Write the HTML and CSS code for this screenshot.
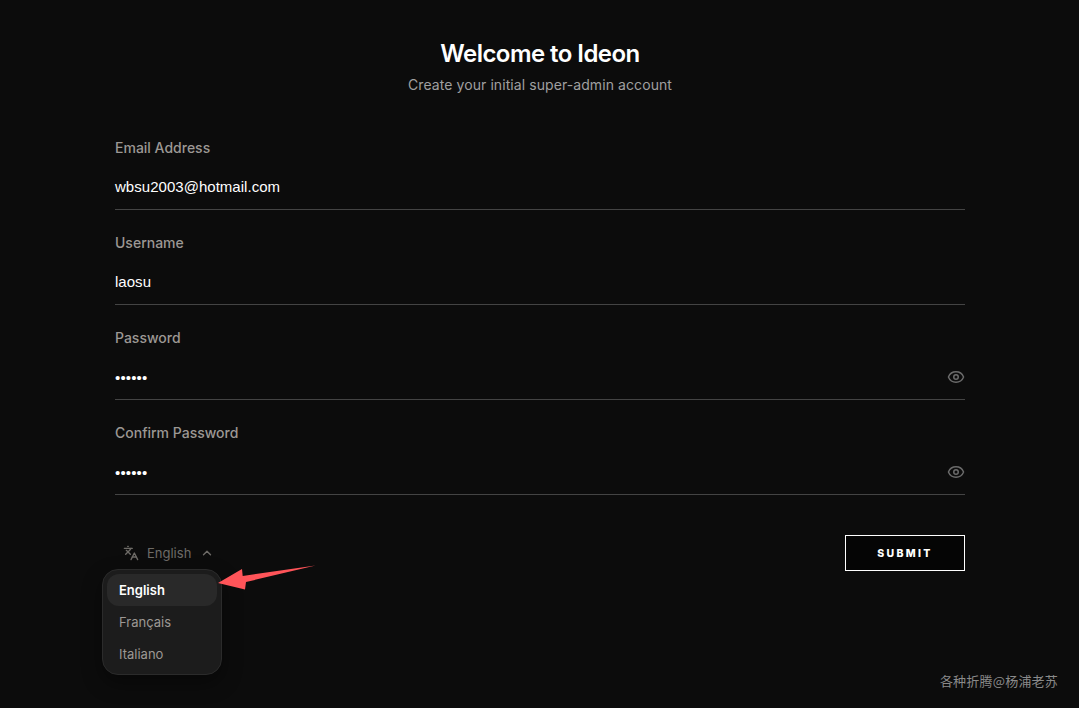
FILE: index.html
```html
<!DOCTYPE html>
<html lang="en">
<head>
<meta charset="utf-8">
<title>Welcome to Ideon</title>
<link rel="stylesheet" href="styles.css">
</head>
<body>
<main class="page">
  <header class="head">
    <h1 class="title">Welcome to Ideon</h1>
    <p class="subtitle">Create your initial super-admin account</p>
  </header>
  <form class="form">
    <div class="field">
      <label class="label">Email Address</label>
      <div class="control"><span class="value text">wbsu2003@hotmail.com</span></div>
    </div>
    <div class="field">
      <label class="label">Username</label>
      <div class="control"><span class="value text">laosu</span></div>
    </div>
    <div class="field">
      <label class="label">Password</label>
      <div class="control">
        <span class="value dots">••••••</span>
        <svg class="eye" viewBox="0 0 24 24" fill="none" stroke="currentColor" stroke-width="2" stroke-linecap="round" stroke-linejoin="round"><path d="M2.06 12.35a1 1 0 0 1 0-.7 10.75 10.75 0 0 1 19.88 0 1 1 0 0 1 0 .7 10.75 10.75 0 0 1-19.88 0"/><circle cx="12" cy="12" r="3"/></svg>
      </div>
    </div>
    <div class="field">
      <label class="label">Confirm Password</label>
      <div class="control">
        <span class="value dots">••••••</span>
        <svg class="eye" viewBox="0 0 24 24" fill="none" stroke="currentColor" stroke-width="2" stroke-linecap="round" stroke-linejoin="round"><path d="M2.06 12.35a1 1 0 0 1 0-.7 10.75 10.75 0 0 1 19.88 0 1 1 0 0 1 0 .7 10.75 10.75 0 0 1-19.88 0"/><circle cx="12" cy="12" r="3"/></svg>
      </div>
    </div>
    <div class="actions">
      <div class="lang">
        <svg class="lang-icon" viewBox="0 0 24 24" fill="none" stroke="currentColor" stroke-width="2" stroke-linecap="round" stroke-linejoin="round"><path d="m5 8 6 6"/><path d="m4 14 6-6 2-3"/><path d="M2 5h12"/><path d="M7 2h1"/><path d="m22 22-5-10-5 10"/><path d="M14 18h6"/></svg>
        <span>English</span>
        <svg class="chev" viewBox="0 0 24 24" fill="none" stroke="currentColor" stroke-width="2.4" stroke-linecap="round" stroke-linejoin="round"><path d="m18 15-6-6-6 6"/></svg>
        <ul class="menu">
          <li class="item active">English</li>
          <li class="item">Français</li>
          <li class="item">Italiano</li>
        </ul>
      </div>
      <button class="submit" type="button">SUBMIT</button>
    </div>
  </form>
</main>
<svg class="arrow" viewBox="0 0 100 30" width="100" height="30"><polygon points="2,19 26,5 26.7,12 99.5,1.5 30,18 29,25.5"/></svg>
<div class="watermark">各种折腾@杨浦老苏</div>
</body>
</html>
```
FILE: styles.css
```css
* { box-sizing: border-box; }
html, body { margin: 0; height: 100%; }
body {
  background: #0c0c0c;
  font-family: Inter, "Liberation Sans", sans-serif;
  overflow: hidden;
  position: relative;
}
.page { width: 850px; margin-left: 115px; padding-top: 38px; }
.head { text-align: center; }
.title { margin: 0; font-size: 24px; line-height: 32px; font-weight: 600; letter-spacing: -0.55px; color: #fff; }
.subtitle { margin: 5px 0 0; font-size: 14px; line-height: 20px; letter-spacing: 0.08px; color: #a0a0a0; }
.form { margin-top: 35px; }
.field { height: 95px; padding-top: 8px; }
.label { display: block; font-size: 14px; line-height: 20px; font-weight: 500; color: #9c9894; }
.control { display: flex; align-items: center; justify-content: space-between; height: 52px; padding-top: 7px; border-bottom: 1px solid #444; }
.value { font-family: "Liberation Sans", Arial, sans-serif; font-size: 15px; letter-spacing: 0.03px; color: #fff; }
.text { margin-bottom: 2px; }
.dots { letter-spacing: 0.15px; }
.eye { width: 18px; height: 18px; color: #6b6b6b; }
.actions { display: flex; justify-content: space-between; align-items: flex-start; margin-top: 25px; }
.lang { position: relative; display: flex; align-items: center; height: 36px; padding-left: 8px; gap: 8px; font-size: 13px; color: #6e6b67; }
.lang-icon { width: 16px; height: 16px; }
.chev { width: 14px; height: 14px; margin-left: 1px; }
.menu {
  position: absolute; left: -13px; top: 34px; width: 120px; height: 106px;
  margin: 0; padding: 4px; list-style: none;
  background: #1c1c1c; border: 1px solid #2b2b2b; border-radius: 16px;
  box-shadow: 0 8px 20px rgba(0,0,0,.4);
}
.item { height: 32px; padding-left: 12px; line-height: 32px; font-size: 13px; color: #9c9894; border-radius: 12px; }
.active { background: #292929; color: #fff; font-weight: 600; }
.submit {
  width: 120px; height: 36px; background: #050505; border: 1px solid #fff;
  color: #fff; font-family: Inter, sans-serif; font-size: 10.5px; font-weight: 800; letter-spacing: 2.3px; padding: 0;
}
.arrow { position: absolute; left: 216px; top: 564px; }
.arrow polygon { fill: #ff5459; }
.watermark { position: absolute; right: 21px; top: 672px; font-family: "Noto Sans CJK SC", sans-serif; font-size: 13px; line-height: 18px; letter-spacing: 0.2px; color: #8a8a8a; }
```
